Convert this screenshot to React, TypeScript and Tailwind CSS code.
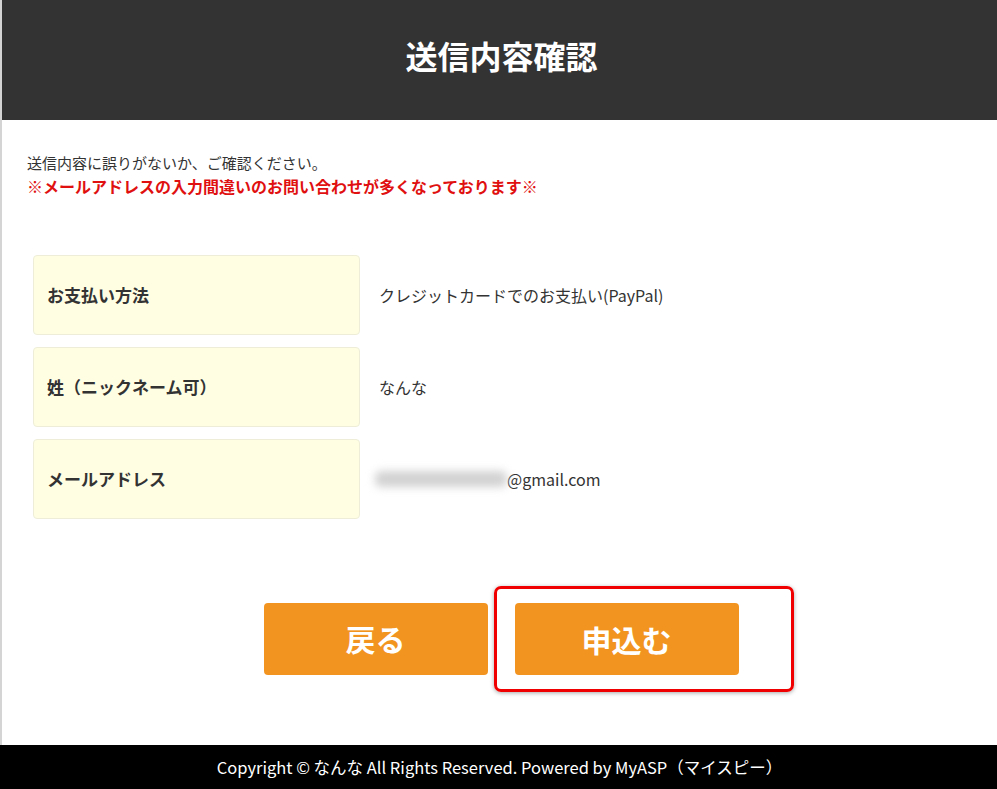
import React from "react";

const F = { fontFamily: '"Noto Sans CJK JP", "Noto Sans", sans-serif' };

function Row({ label, children }: { label: string; children: React.ReactNode }) {
  return (
    <div className="flex items-center">
      <div className="w-[327px] h-[80px] flex items-center pl-[13px] bg-[#fffee3] border border-[#eeeed8] rounded-[4px] text-[17px] font-bold text-[#333]">
        {label}
      </div>
      <div className="pl-[19px] text-[16px] text-[#333]">{children}</div>
    </div>
  );
}

export default function App() {
  return (
    <div className="w-[997px] h-[789px] flex flex-col bg-white" style={F}>
      <div className="flex-1 flex flex-col border-l-2 border-[#d4d4d4]">
        <div className="h-[120px] bg-[#333333] flex items-center justify-center">
          <h1 className="text-[32px] font-bold text-white pb-[10px] pl-[4px]">送信内容確認</h1>
        </div>
        <div className="pl-[25px] pt-[30px] leading-[26px]">
          <p className="text-[15px] text-[#333]">送信内容に誤りがないか、ご確認ください。</p>
          <p className="text-[16px] font-bold text-[#e01010] -mt-[3px]">※メールアドレスの入力間違いのお問い合わせが多くなっております※</p>
        </div>
        <div className="pl-[31px] pt-[56px] flex flex-col gap-[12px]">
          <Row label="お支払い方法">クレジットカードでのお支払い(PayPal)</Row>
          <Row label="姓（ニックネーム可）">なんな</Row>
          <Row label="メールアドレス">
            <span className="inline-flex items-center -ml-[4px]">
              <span className="inline-block w-[132px] h-[16px] bg-[#d2d2d2] rounded-[6px] blur-[4px]"></span>
              @gmail.com
            </span>
          </Row>
        </div>
        <div className="flex justify-center items-center pt-[67px] pl-[58px]">
          <button className="w-[224px] h-[72px] bg-[#f29420] rounded-[4px] text-white text-[30px] font-bold -mt-[1px]">戻る</button>
          <div className="ml-[6px] w-[300px] h-[106px] border-[3px] border-[#f00000] rounded-[7px] shadow-[0_1px_4px_rgba(0,0,0,0.35)] flex items-center pl-[18px]">
            <button className="w-[224px] h-[72px] bg-[#f29420] rounded-[4px] text-white text-[30px] font-bold">申込む</button>
          </div>
        </div>
      </div>
      <div className="h-[44px] bg-black flex items-center justify-center">
        <span className="text-white text-[16.5px] pl-[2px]">Copyright © なんな All Rights Reserved. Powered by MyASP（マイスピー）</span>
      </div>
    </div>
  );
}
